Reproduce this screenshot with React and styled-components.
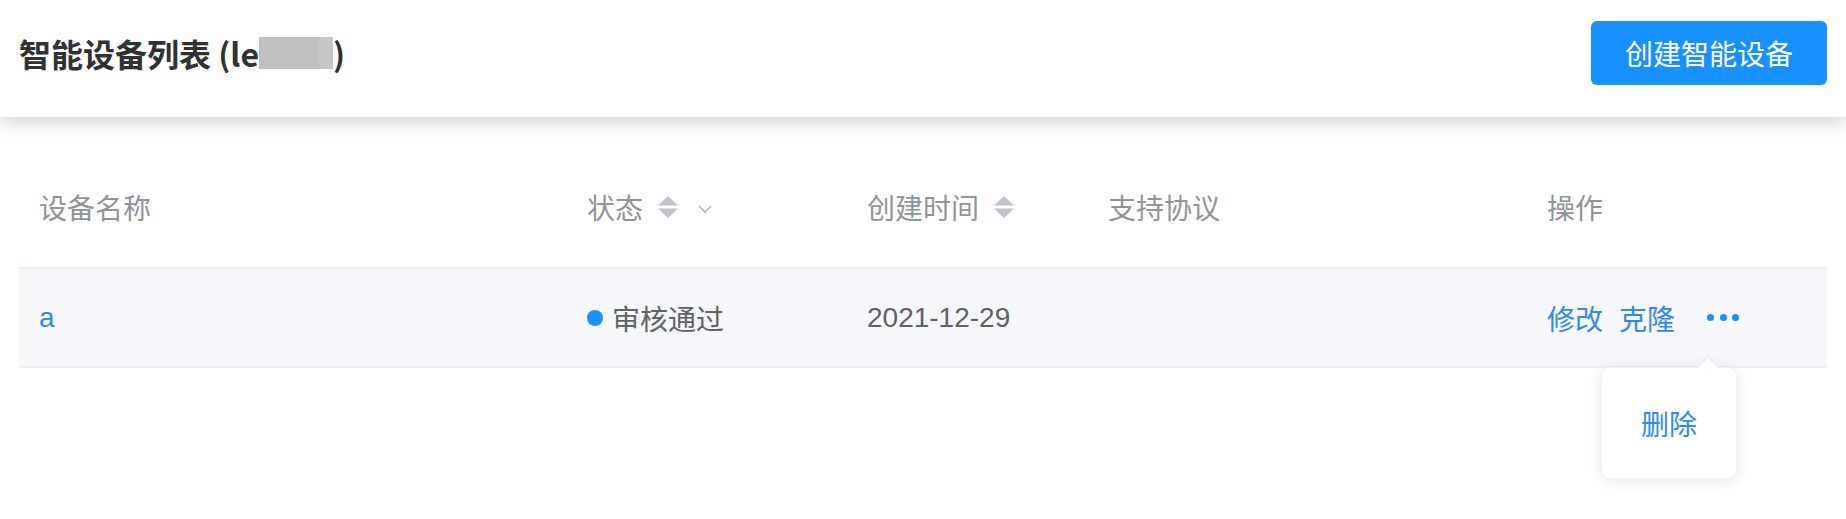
import React from "react";
import styled, { createGlobalStyle } from "styled-components";

const GlobalStyle = createGlobalStyle`
  html, body { margin: 0; padding: 0; background: #fff; }
  body {
    font-family: "Liberation Sans", "Noto Sans CJK SC", sans-serif;
    color: #606266;
  }
  * { box-sizing: border-box; }
`;

const Page = styled.div`
  width: 1846px;
  min-height: 519px;
  background: #fff;
`;

const Header = styled.header`
  position: relative;
  z-index: 1;
  height: 117px;
  display: flex;
  align-items: center;
  justify-content: space-between;
  padding: 0 19px 11px 19px;
  background: #fff;
  box-shadow: 0 4px 18px rgba(0, 0, 0, 0.2);
`;

const Title = styled.h1`
  margin: 0;
  font-family: "Noto Sans CJK SC", sans-serif;
  font-size: 32px;
  font-weight: 700;
  line-height: 40px;
  color: #303133;
  display: flex;
  align-items: center;
  white-space: pre;
`;

const Redacted = styled.span`
  display: inline-block;
  width: 74px;
  height: 32px;
  background: linear-gradient(to right, #c0c0c0 81%, #c8c6c4 81%);
`;

const PrimaryButton = styled.button`
  width: 236px;
  height: 64px;
  border: none;
  border-radius: 6px;
  background: #1890ff;
  color: #fff;
  font-family: "Noto Sans CJK SC", sans-serif;
  font-size: 28px;
  cursor: pointer;
`;

const Main = styled.main`
  padding: 50px 19px 0 19px;
`;

const Row = styled.div`
  display: grid;
  grid-template-columns: 548px 280px 241px 439px 300px;
  border-bottom: 2px solid #ebeef5;
  background: ${(p) => (p.$hover ? "#f5f7fa" : "transparent")};
`;

const HeadCell = styled.div`
  display: flex;
  align-items: center;
  padding: 20px 20px 40px;
  height: 100px;
  line-height: 40px;
  font-size: 28px;
  color: #909399;
  font-family: "Noto Sans CJK SC", sans-serif;
`;

const Cell = styled.div`
  display: flex;
  align-items: center;
  height: 97px;
  padding: 0 20px;
  line-height: 40px;
  font-size: 28px;
  color: #606266;
`;

const Link = styled.a`
  color: #2f8ae8;
  text-decoration: none;
  cursor: pointer;
  margin-right: ${(p) => p.$gap || 0}px;
  font-family: ${(p) =>
    p.$cjk ? '"Noto Sans CJK SC", sans-serif' : '"Liberation Sans", sans-serif'};
`;

const Caret = styled.svg`
  margin-left: 15px;
  flex: none;
`;

const Chevron = styled.svg`
  margin-left: 20px;
  margin-top: 4px;
  flex: none;
`;

const StatusDot = styled.span`
  width: 16px;
  height: 16px;
  border-radius: 50%;
  background: #1890ff;
  margin-right: 9px;
  flex: none;
`;

const StatusText = styled.span`
  font-family: "Noto Sans CJK SC", sans-serif;
`;

const MoreWrap = styled.span`
  position: relative;
  margin-left: 32px;
  height: 40px;
  display: inline-flex;
  align-items: center;
`;

const Dots = styled.span`
  display: inline-flex;
  gap: 5.5px;
  cursor: pointer;
`;

const Dot = styled.span`
  width: 7px;
  height: 7px;
  border-radius: 50%;
  background: #1890ff;
`;

const Popover = styled.div`
  position: absolute;
  top: 69px;
  left: -106px;
  width: 136px;
  height: 112px;
  background: #fff;
  border-radius: 8px;
  display: flex;
  align-items: center;
  justify-content: center;
  box-shadow: 0 2px 14px rgba(0, 0, 0, 0.09);
  border: 1px solid #f0f1f4;

  &::before {
    content: "";
    position: absolute;
    top: -10px;
    left: 96px;
    width: 0;
    height: 0;
    border-left: 10px solid transparent;
    border-right: 10px solid transparent;
    border-bottom: 10px solid #fff;
    filter: drop-shadow(0 -2px 2px rgba(0, 0, 0, 0.04));
  }
`;

const PopoverItem = styled.span`
  font-family: "Noto Sans CJK SC", sans-serif;
  font-size: 28px;
  color: #2f8ae8;
  cursor: pointer;
`;

const SortCaret = () => (
  <Caret width="20" height="22" viewBox="0 0 20 22">
    <polygon points="10,0 20,9.5 0,9.5" fill="#c0c4cc" />
    <polygon points="0,12.5 20,12.5 10,22" fill="#c0c4cc" />
  </Caret>
);

const FilterChevron = () => (
  <Chevron width="14" height="8" viewBox="0 0 14 8">
    <polyline points="1,1 7,7 13,1" fill="none" stroke="#a8abb2" strokeWidth="1.3" />
  </Chevron>
);

export default function App() {
  return (
    <Page>
      <GlobalStyle />
      <Header>
        <Title>
          智能设备列表 (le<Redacted />)
        </Title>
        <PrimaryButton>创建智能设备</PrimaryButton>
      </Header>
      <Main>
        <Row>
          <HeadCell>设备名称</HeadCell>
          <HeadCell>
            状态
            <SortCaret />
            <FilterChevron />
          </HeadCell>
          <HeadCell>
            创建时间
            <SortCaret />
          </HeadCell>
          <HeadCell>支持协议</HeadCell>
          <HeadCell>操作</HeadCell>
        </Row>
        <Row $hover>
          <Cell>
            <Link>a</Link>
          </Cell>
          <Cell>
            <StatusDot />
            <StatusText>审核通过</StatusText>
          </Cell>
          <Cell>2021-12-29</Cell>
          <Cell />
          <Cell>
            <Link $cjk $gap={16}>修改</Link>
            <Link $cjk>克隆</Link>
            <MoreWrap>
              <Dots>
                <Dot />
                <Dot />
                <Dot />
              </Dots>
              <Popover>
                <PopoverItem>删除</PopoverItem>
              </Popover>
            </MoreWrap>
          </Cell>
        </Row>
      </Main>
    </Page>
  );
}
